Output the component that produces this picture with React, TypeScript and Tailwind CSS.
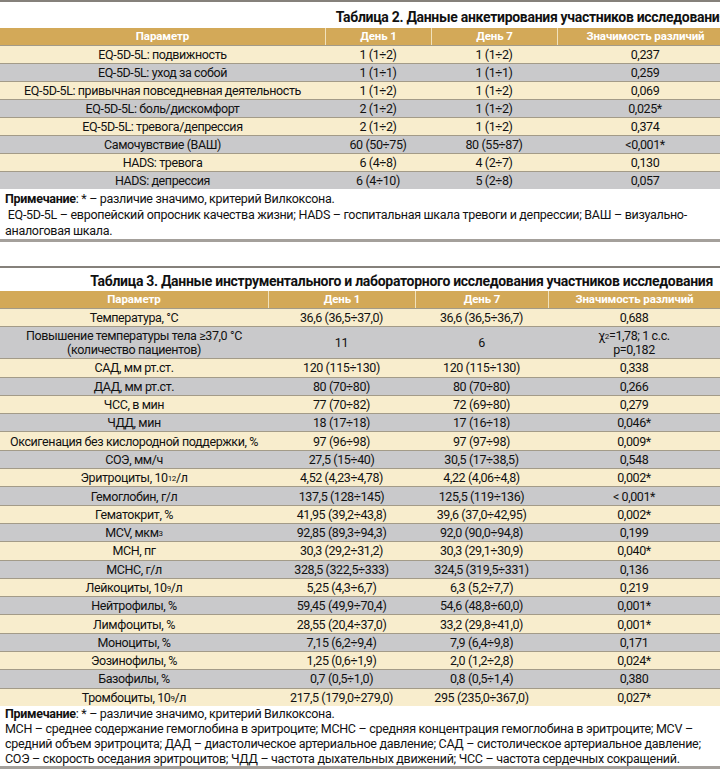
import React from 'react';

type Cell = React.ReactNode;

const t2Rows: Cell[][] = [
  ['EQ-5D-5L: подвижность', '1 (1÷2)', '1 (1÷2)', '0,237'],
  ['EQ-5D-5L: уход за собой', '1 (1÷1)', '1 (1÷1)', '0,259'],
  ['EQ-5D-5L: привычная повседневная деятельность', '1 (1÷2)', '1 (1÷2)', '0,069'],
  ['EQ-5D-5L: боль/дискомфорт', '2 (1÷2)', '1 (1÷2)', '0,025*'],
  ['EQ-5D-5L: тревога/депрессия', '2 (1÷2)', '1 (1÷2)', '0,374'],
  ['Самочувствие (ВАШ)', '60 (50÷75)', '80 (55÷87)', '<0,001*'],
  ['HADS: тревога', '6 (4÷8)', '4 (2÷7)', '0,130'],
  ['HADS: депрессия', '6 (4÷10)', '5 (2÷8)', '0,057'],
];

const sup = (s: string) => <sup className="text-[8px] relative -top-[1px]">{s}</sup>;

const t3Rows: Cell[][] = [
  ['Температура, °C', '36,6 (36,5÷37,0)', '36,6 (36,5÷36,7)', '0,688'],
  [
    <>Повышение температуры тела ≥37,0 °C<br />(количество пациентов)</>,
    '11',
    '6',
    <>χ{sup('2')}=1,78; 1 с.с.<br />p=0,182</>,
  ],
  ['САД, мм рт.ст.', '120 (115÷130)', '120 (115÷130)', '0,338'],
  ['ДАД, мм рт.ст.', '80 (70÷80)', '80 (70÷80)', '0,266'],
  ['ЧСС, в мин', '77 (70÷82)', '72 (69÷80)', '0,279'],
  ['ЧДД, мин', '18 (17÷18)', '17 (16÷18)', '0,046*'],
  ['Оксигенация без кислородной поддержки, %', '97 (96÷98)', '97 (97÷98)', '0,009*'],
  ['СОЭ, мм/ч', '27,5 (15÷40)', '30,5 (17÷38,5)', '0,548'],
  [<>Эритроциты, 10{sup('12')}/л</>, '4,52 (4,23÷4,78)', '4,22 (4,06÷4,8)', '0,002*'],
  ['Гемоглобин, г/л', '137,5 (128÷145)', '125,5 (119÷136)', '< 0,001*'],
  ['Гематокрит, %', '41,95 (39,2÷43,8)', '39,6 (37,0÷42,95)', '0,002*'],
  [<>MCV, мкм{sup('3')}</>, '92,85 (89,3÷94,3)', '92,0 (90,0÷94,8)', '0,199'],
  ['МСН, пг', '30,3 (29,2÷31,2)', '30,3 (29,1÷30,9)', '0,040*'],
  ['МСНС, г/л', '328,5 (322,5÷333)', '324,5 (319,5÷331)', '0,136'],
  [<>Лейкоциты, 10{sup('9')}/л</>, '5,25 (4,3÷6,7)', '6,3 (5,2÷7,7)', '0,219'],
  ['Нейтрофилы, %', '59,45 (49,9÷70,4)', '54,6 (48,8÷60,0)', '0,001*'],
  ['Лимфоциты, %', '28,55 (20,4÷37,0)', '33,2 (29,8÷41,0)', '0,001*'],
  ['Моноциты, %', '7,15 (6,2÷9,4)', '7,9 (6,4÷9,8)', '0,171'],
  ['Эозинофилы, %', '1,25 (0,6÷1,9)', '2,0 (1,2÷2,8)', '0,024*'],
  ['Базофилы, %', '0,7 (0,5÷1,0)', '0,8 (0,5÷1,4)', '0,380'],
  [<>Тромбоциты, 10{sup('9')}/л</>, '217,5 (179,0÷279,0)', '295 (235,0÷367,0)', '0,027*'],
];

const heads = ['Параметр', 'День 1', 'День 7', 'Значимость различий'];

function Table({ rows, cols, rowH, tallRow }: { rows: Cell[][]; cols: string; rowH: string; tallRow?: number }) {
  return (
    <div>
      <div className={`grid ${cols} h-[17px] bg-[#d3a958] text-white font-bold text-[11.5px] leading-[17px] tracking-[-0.1px]`}>
        {heads.map((h, i) => (
          <div key={i} className={`text-center ${i > 0 ? 'border-l border-[#f1e2bd]' : ''}`}>
            {h}
          </div>
        ))}
      </div>
      {rows.map((r, i) => (
        <div
          key={i}
          className={`grid ${cols} border-t border-[#a39b88] ${i % 2 === 0 ? 'bg-[#f8edcd]' : 'bg-[#c9c9cb]'} ${i === tallRow ? 'h-[32px] leading-[14px]' : rowH}`}
        >
          {r.map((c, j) => (
            <div key={j} className="flex items-center justify-center text-center whitespace-nowrap">
              <div>{c}</div>
            </div>
          ))}
        </div>
      ))}
    </div>
  );
}

export default function App() {
  return (
    <div className="w-[720px] h-[770px] overflow-hidden bg-white text-[#111] font-['Roboto',sans-serif] text-[12.5px]">
      {/* Таблица 2 */}
      <div className="w-[733px]">
        <div className="h-[2px] bg-[#85817b]" />
        <div className="h-[26px] pt-[6px] pr-[6px] text-right font-bold text-[14px] leading-[18px] tracking-[-0.3px] whitespace-nowrap">
          Таблица 2. Данные анкетирования участников исследования
        </div>
        <div className="tracking-[-0.4px]">
          <Table rows={t2Rows} cols="grid-cols-[325px_106px_126px_176px]" rowH="h-[18px] leading-[17px]" />
        </div>
        <div className="h-[50px] pt-[2px] pl-[5px] leading-[16px] tracking-[-0.3px] whitespace-nowrap">
          <div>
            <b>Примечание</b>: * – различие значимо, критерий Вилкоксона.
          </div>
          <div>&nbsp;EQ-5D-5L – европейский опросник качества жизни; HADS – госпитальная шкала тревоги и депрессии; ВАШ – визуально-</div>
          <div>аналоговая шкала.</div>
        </div>
        <div className="h-[3px] bg-[#a4a09b]" />
      </div>

      <div className="h-[24px]" />

      {/* Таблица 3 */}
      <div className="w-[720px]">
        <div className="h-[2px] bg-[#85817b]" />
        <div className="h-[23px] pt-[4px] pr-[7px] text-right font-bold text-[14px] leading-[18px] tracking-[-0.3px] whitespace-nowrap">
          Таблица 3. Данные инструментального и лабораторного исследования участников исследования
        </div>
        <div className="tracking-[-0.4px]">
          <Table rows={t3Rows} cols="grid-cols-[268px_147px_133px_172px]" rowH="h-[18.3px] leading-[17px]" tallRow={1} />
        </div>
        <div className="pl-[5px] leading-[15px] tracking-[-0.3px] whitespace-nowrap">
          <div>
            <b>Примечание</b>: * – различие значимо, критерий Вилкоксона.
          </div>
          <div>МСН – среднее содержание гемоглобина в эритроците; МСНС – средняя концентрация гемоглобина в эритроците; MCV –</div>
          <div>средний объем эритроцита; ДАД – диастолическое артериальное давление; САД – систолическое артериальное давление;</div>
          <div>СОЭ – скорость оседания эритроцитов; ЧДД – частота дыхательных движений; ЧСС – частота сердечных сокращений.</div>
        </div>
        <div className="h-[3px] bg-[#a4a09b]" />
      </div>
    </div>
  );
}
